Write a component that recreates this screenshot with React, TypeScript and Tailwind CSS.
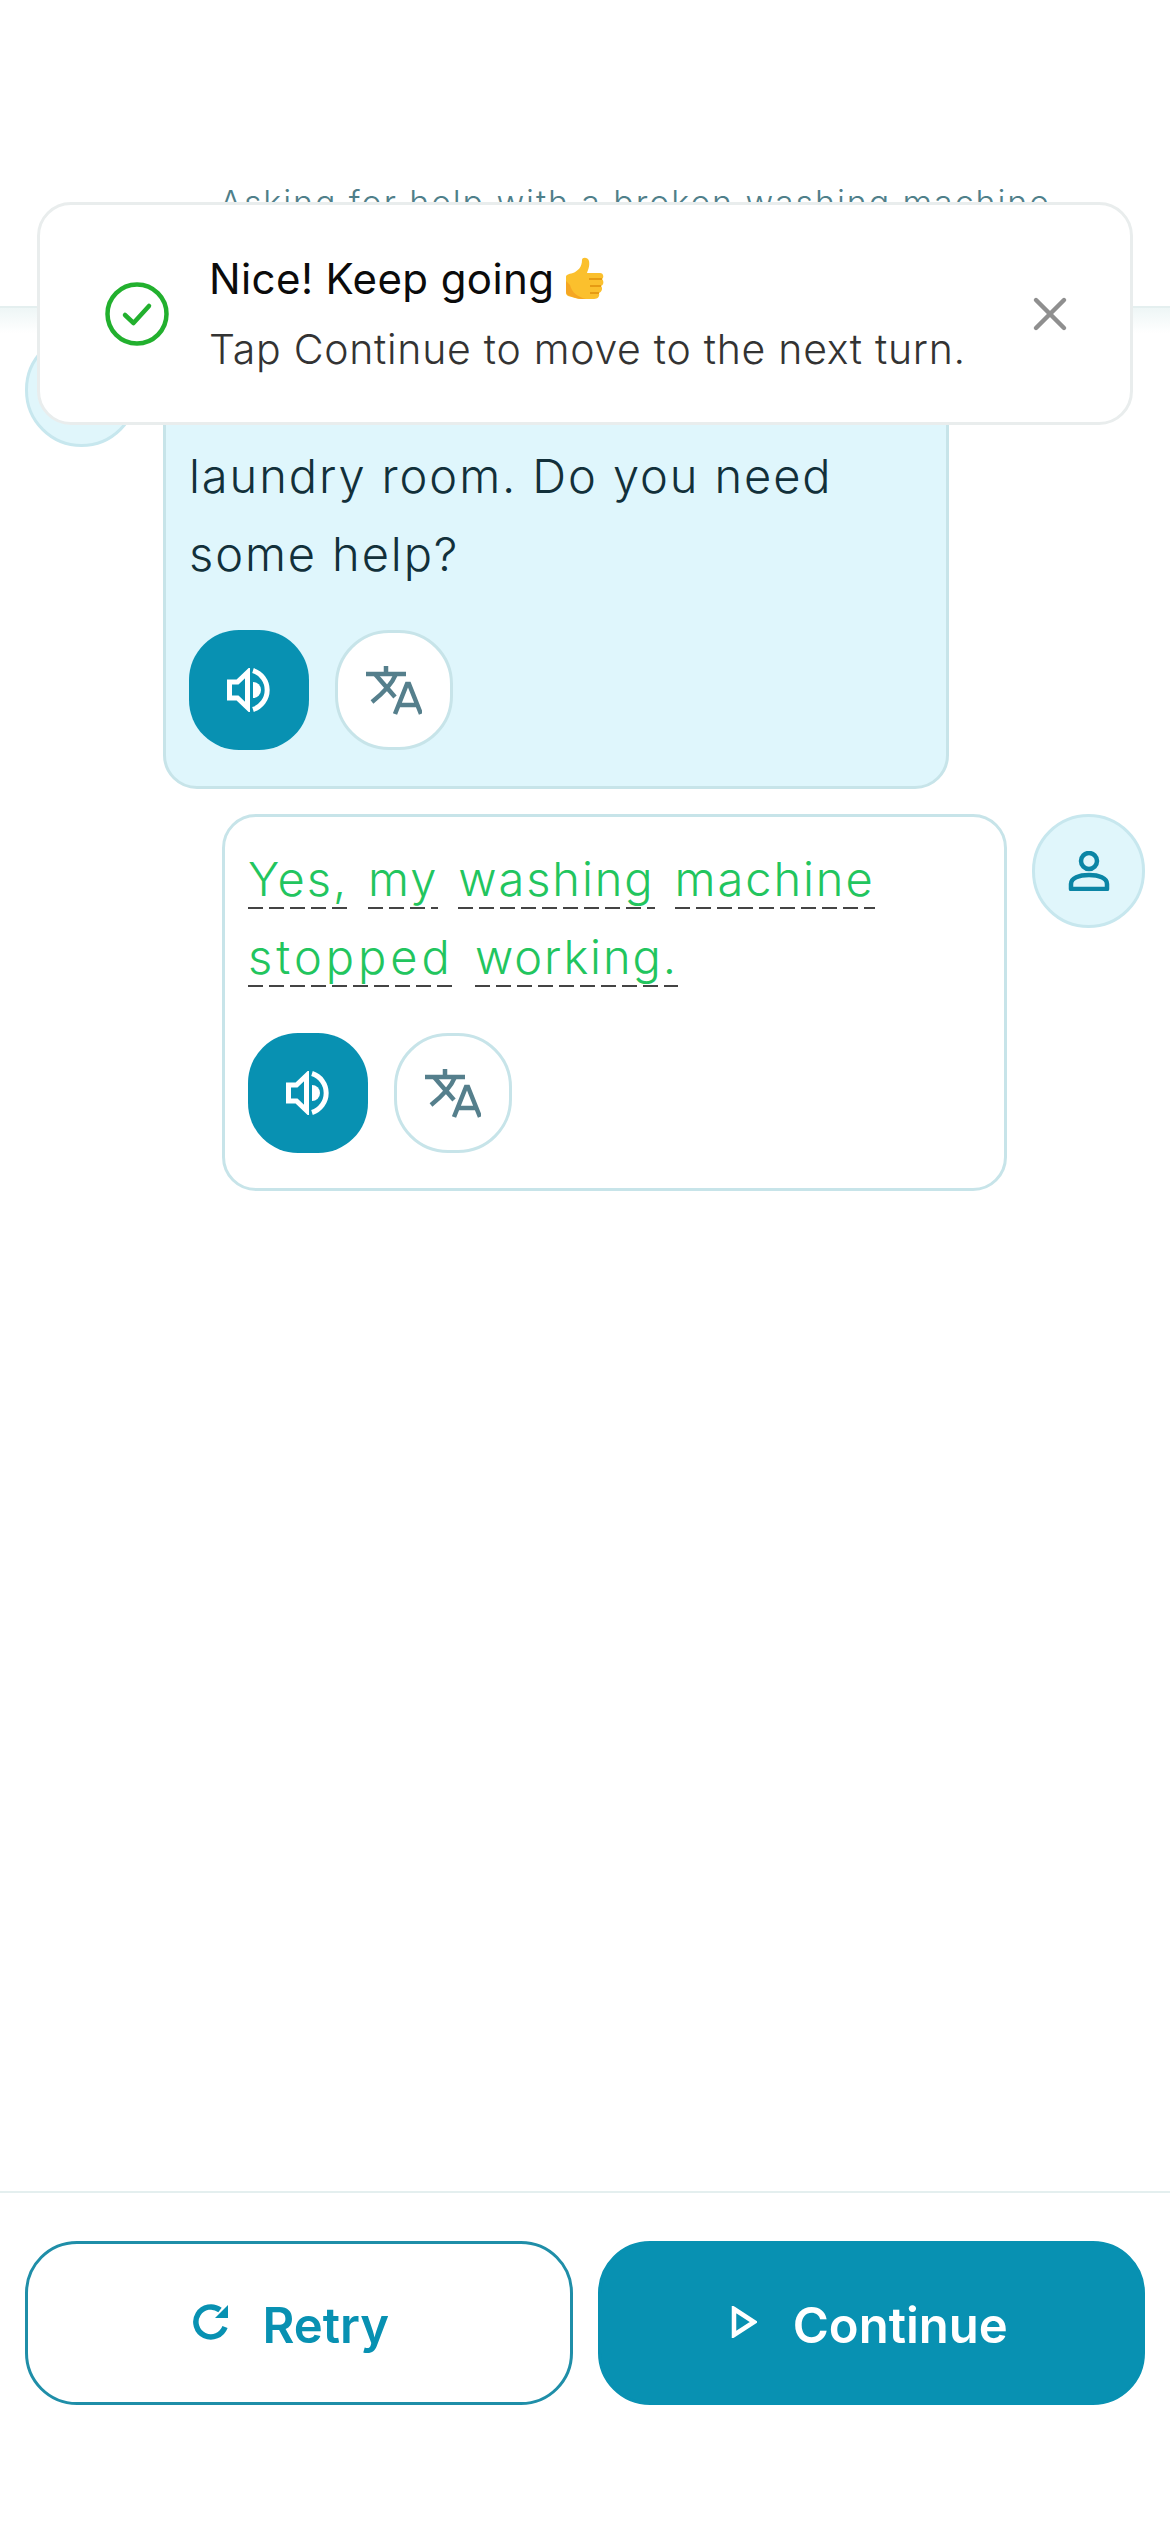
import { X } from "lucide-react"

function SpeakerIcon() {
  return (
    <svg width="44" height="44" viewBox="0 0 44 44" fill="none">
      <path d="M20.5 4.5 L10.5 14 H2.5 V30 H10.5 L20.5 39.5 Z" stroke="white" strokeWidth="5" />
      <path d="M26 2.5 A20.5 20.5 0 0 1 26 41.5" stroke="white" strokeWidth="5" />
      <path d="M26 14 A8 8 0 0 1 26 30 Z" fill="white" />
    </svg>
  )
}

function TranslateIcon() {
  return (
    <svg width="56" height="52" viewBox="0 0 56 52" fill="none" stroke="#557f8c" strokeWidth="4.5">
      <path d="M0 10 H40 M20 2 V10" />
      <path d="M9 10 L29 33" />
      <path d="M30 10 C26 20 16 30 6 38" />
      <path d="M29 50 L41 20 H43 L55 50 M33 41 H51" />
    </svg>
  )
}

function PersonIcon() {
  return (
    <svg width="42" height="40" viewBox="0 0 42 40" fill="none" stroke="#0b85a5" strokeWidth="4.5">
      <circle cx="21" cy="10" r="8" />
      <path d="M3 38 V33 C3 27 11 24 21 24 C31 24 39 27 39 33 V38 Z" strokeLinejoin="round" />
    </svg>
  )
}

function ThumbsUp() {
  return (
    <svg width="42" height="43" viewBox="0 0 42 43">
      <path d="M2 20 C2 18 4 17 9 16 C14 14 18 10 18 3 C18 0 24 0 25 4 C26 9 24 13 23 16 H36 C40 16 40 21 38 22 C40 24 40 28 37 29 C39 31 38 35 35 36 C36 39 34 42 30 42 H18 C13 42 9 40 4 39 C2 38 2 36 2 34 Z" fill="#fbc02d" />
      <path d="M2 24 V34 C2 37 3 38 6 39 C10 40 14 42 18 42 H22 C14 40 8 36 6 28 Z" fill="#f5a623" />
      <path d="M25 22 H38 M26 29 H37 M26 36 H35" stroke="#e08e0b" strokeWidth="1.5" fill="none" />
    </svg>
  )
}

function Word({ children, className = "mr-[20px]" }: { children: string; className?: string }) {
  return (
    <span
      className={`inline-block h-[78px] bg-[repeating-linear-gradient(90deg,#444_0_15px,transparent_15px_21px)] bg-[length:100%_2px] bg-[position:0_67px] bg-no-repeat ${className}`}
    >
      {children}
    </span>
  )
}

function ActionButtons() {
  return (
    <div className="mt-[37px] flex gap-[26px]">
      <button className="flex h-[120px] w-[120px] items-center justify-center rounded-[50px] bg-[#0891b2]">
        <SpeakerIcon />
      </button>
      <button className="flex h-[120px] w-[118px] items-center justify-center rounded-[54px] border-[3px] border-[#c7e4e9] bg-white">
        <TranslateIcon />
      </button>
    </div>
  )
}

export default function App() {
  return (
    <div
      className="relative flex h-[2532px] w-[1170px] flex-col overflow-hidden bg-white"
      style={{ fontFamily: "Inter, 'Noto Sans', sans-serif" }}
    >
      {/* Header */}
      <div className="h-[308px] border-b-2 border-[#e4efef] pl-[100px] pt-[178px] text-center text-[34px] font-light leading-[50px] tracking-[1.9px] text-[#4f7f8a]">
        Asking for help with a broken washing machine
      </div>
      <div className="h-[25px] bg-gradient-to-b from-[#eef6f6] to-white" />

      {/* Chat */}
      <div className="flex flex-1 flex-col gap-[25px] px-[25px]">
        <div className="flex gap-[25px]">
          <div className="h-[114px] w-[113px] shrink-0 rounded-full border-[3px] border-[#c7e7ee] bg-[#e0f6fb]" />
          <div className="h-[456px] w-[786px] rounded-[34px] border-[3px] border-[#c7e4e9] bg-[#dff6fc] px-[23px] pt-[23px] text-[47px] font-light leading-[78px] tracking-[1.9px] text-[#12303a]">
            <p>Hi, I see you in the</p>
            <p>laundry room. Do you need</p>
            <p>some help?</p>
            <ActionButtons />
          </div>
        </div>

        <div className="flex justify-end gap-[25px]">
          <div className="h-[377px] w-[785px] rounded-[34px] border-[3px] border-[#c7e4e9] bg-white px-[23px] pt-[23px] text-[47px] font-light leading-[78px] tracking-[1.9px] text-[#22c55e]">
            <div className="flex">
              <Word>Yes,</Word>
              <Word>my</Word>
              <Word>washing</Word>
              <Word className="">machine</Word>
            </div>
            <div className="flex">
              <Word className="mr-[20px] w-[207px] tracking-[4px]">stopped</Word>
              <Word className="">working.</Word>
            </div>
            <ActionButtons />
          </div>
          <div className="flex h-[114px] w-[113px] shrink-0 items-center justify-center rounded-full border-[3px] border-[#c7e7ee] bg-[#e0f6fb]">
            <PersonIcon />
          </div>
        </div>
      </div>

      {/* Footer */}
      <div className="grid h-[341px] grid-cols-2 gap-[25px] border-t-2 border-[#e4efef] px-[25px] pt-[48px]">
        <button className="flex h-[164px] items-center justify-center gap-[30px] rounded-[52px] border-[3px] border-[#1f8ea8] bg-white pr-[16px] pt-[6px] text-[49px] font-semibold text-[#0891b2]">
          <svg width="40" height="40" viewBox="0 0 40 40" fill="none" className="-mt-[8px]">
            <path d="M33 25 A15 15 0 1 1 28 8" stroke="#0891b2" strokeWidth="5.5" />
            <path d="M36 3 V16 H23 Z" fill="#0891b2" />
          </svg>
          Retry
        </button>
        <button className="flex h-[164px] items-center justify-center gap-[36px] rounded-[52px] border-[3px] border-[#0891b2] bg-[#0891b2] pr-[4px] pt-[6px] text-[49px] font-semibold text-white">
          <svg width="26" height="32" viewBox="0 0 26 32" fill="none" className="-mt-[8px]">
            <path d="M3 3 L23 16 L3 29 Z" stroke="white" strokeWidth="4.5" />
          </svg>
          Continue
        </button>
      </div>

      {/* Toast */}
      <div className="absolute left-[37px] top-[202px] flex h-[223px] w-[1096px] items-center rounded-[34px] border-[3px] border-[#e9eded] bg-white pl-[65px] pr-[52px]">
        <svg width="64" height="64" viewBox="0 0 64 64" fill="none" stroke="#22b02e" strokeWidth="4.5" className="shrink-0">
          <circle cx="32" cy="32" r="29.5" />
          <path d="M20 33 L28.5 41 L44 24" strokeLinecap="round" strokeLinejoin="round" />
        </svg>
        <div className="ml-[40px] flex-1">
          <p className="flex items-center gap-[10px] text-[42px] font-normal leading-[70px] tracking-[0.4px] text-[#0b0b0b]">
            Nice! Keep going <ThumbsUp />
          </p>
          <p className="text-[41px] font-light leading-[70px] tracking-[0.72px] text-[#333]">Tap Continue to move to the next turn.</p>
        </div>
        <X size={56} strokeWidth={1.9} color="#8f8f8f" className="shrink-0" />
      </div>
    </div>
  )
}
